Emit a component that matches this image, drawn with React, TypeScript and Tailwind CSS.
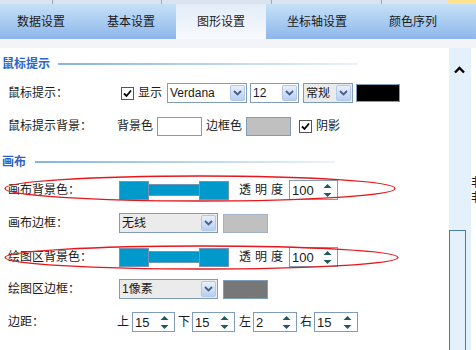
import React from "react";

const Chevron = () => (
  <svg width="9" height="6" viewBox="0 0 9 6">
    <path d="M1 1 L4.5 4.5 L8 1" fill="none" stroke="#4a5f86" strokeWidth="1.8" />
  </svg>
);

const Select = ({ text, cls }: { text: string; cls: string }) => (
  <div className={`flex items-center h-[20px] border border-[#7f9db9] ${cls}`}>
    <span className="flex-1 pl-[2px] leading-none whitespace-nowrap overflow-hidden">{text}</span>
    <div className="w-[15px] h-[16px] mr-[1px] border border-[#b3c8e8] rounded-[2px] bg-linear-to-b from-[#e8f0fc] to-[#b9cff1] flex items-center justify-center">
      <Chevron />
    </div>
  </div>
);

const Spin = ({ v, cls }: { v: string; cls: string }) => (
  <div className={`flex items-center h-[20px] border border-[#7f9db9] bg-white ${cls}`}>
    <span className="flex-1 pl-[2px] text-[13px] leading-none">{v}</span>
    <svg width="9" height="15" viewBox="0 0 9 15" className="mr-[5px]">
      <path d="M0.5 5 L4.5 1 L8.5 5 Z" fill="#1f5b5e" />
      <path d="M0.5 10 L4.5 14 L8.5 10 Z" fill="#1f5b5e" />
    </svg>
  </div>
);

const Check = () => (
  <div className="w-[13px] h-[13px] border border-[#555] bg-white flex items-center justify-center">
    <svg width="9" height="9" viewBox="0 0 9 9">
      <path d="M1 4.5 L3.5 7 L8 1.5" fill="none" stroke="#000" strokeWidth="1.8" />
    </svg>
  </div>
);

const Swatch = () => (
  <div className="flex items-center">
    <div className="w-[30px] h-[19px] border border-[#6f95b8] bg-[#0099cc]" />
    <div className="w-[50px] h-[12px] border-y border-[#6f95b8] bg-[#0099cc]" />
    <div className="w-[30px] h-[19px] border border-[#6f95b8] bg-[#0099cc]" />
  </div>
);

const Opacity = () => (
  <div className="flex items-center">
    <div className="ml-[10px] flex gap-[4px] w-[44px]">
      <span>透</span>
      <span>明</span>
      <span>度</span>
    </div>
    <Spin v="100" cls="ml-[6px] w-[49px]" />
  </div>
);

const Label = ({ t }: { t: string }) => <div className="w-[109px] shrink-0">{t}</div>;

export default function App() {
  return (
    <div className="relative w-[476px] h-[350px] overflow-hidden bg-white text-[12px] text-[#1a1a1a] font-['Liberation_Sans','Noto_Sans_CJK_SC',sans-serif]">
      {/* top strip */}
      <div className="h-[4px] flex bg-[#dbe3ee]">
        <div className="w-[52px]" />
        <div className="w-[1px] bg-[#9aa9bb]" />
        <div className="w-[108px]" />
        <div className="w-[1px] bg-[#9aa9bb]" />
        <div className="w-[109px]" />
        <div className="w-[1px] bg-[#9aa9bb]" />
        <div className="w-[109px]" />
        <div className="w-[1px] bg-[#9aa9bb]" />
        <div className="w-[65px]" />
        <div className="flex-1 bg-[#fde38e]" />
      </div>
      {/* tabs */}
      <div className="h-[35px] flex bg-linear-to-b from-[#c6e1f6] to-[#8db6eb] text-[12px]">
        <div className="w-[88px] pl-[17px] flex items-center">数据设置</div>
        <div className="w-[88px] pl-[19px] flex items-center">基本设置</div>
        <div className="w-[90px] pl-[21px] flex items-center bg-linear-to-b from-[#e2ecf8] to-[#f8fafd]">图形设置</div>
        <div className="w-[102px] pl-[21px] flex items-center">坐标轴设置</div>
        <div className="flex-1 pl-[21px] flex items-center">颜色序列</div>
      </div>
      <div className="h-[9px] bg-[#f2f4f8]" />
      {/* main */}
      <div className="flex h-[302px]">
        <div className="w-[449px] flex flex-col">
          {/* header 1 */}
          <div className="h-[32px] flex items-center pl-[2px]">
            <span className="text-[#2d64c8] font-bold w-[48px]">鼠标提示</span>
            <div className="ml-[8px] w-[300px] h-[2px] bg-linear-to-r from-[#86b4da] to-[#eaf3fb]" />
          </div>
          {/* row 1 */}
          <div className="h-[26px] flex items-center pl-[8px]">
            <Label t="鼠标提示：" />
            <div className="ml-[4px]"><Check /></div>
            <span className="ml-[4px]">显示</span>
            <Select text="Verdana" cls="ml-[5px] w-[80px] bg-white" />
            <Select text="12" cls="ml-[3px] w-[49px] bg-white" />
            <Select text="常规" cls="ml-[4px] w-[50px] bg-[#ebebeb]" />
            <div className="ml-[3px] w-[44px] h-[18px] border border-[#7f9db9] bg-black" />
          </div>
          {/* row 2 */}
          <div className="h-[40px] flex items-center pl-[8px]">
            <Label t="鼠标提示背景：" />
            <span>背景色</span>
            <div className="ml-[4px] w-[45px] h-[19px] border border-[#7f9db9] bg-white" />
            <span className="ml-[4px]">边框色</span>
            <div className="ml-[4px] w-[45px] h-[19px] border border-[#7f9db9] bg-[#c0c0c0]" />
            <div className="ml-[8px]"><Check /></div>
            <span className="ml-[4px]">阴影</span>
          </div>
          {/* header 2 */}
          <div className="h-[32px] flex items-center pl-[2px]">
            <span className="text-[#2d64c8] font-bold w-[24px]">画布</span>
            <div className="ml-[9px] w-[300px] h-[2px] bg-linear-to-r from-[#86b4da] to-[#eaf3fb]" />
          </div>
          {/* row 3 */}
          <div className="h-[24px] flex items-center pl-[8px]">
            <Label t="画布背景色：" />
            <div className="ml-[2px]"><Swatch /></div>
            <Opacity />
          </div>
          {/* row 4 */}
          <div className="h-[42px] flex items-center pl-[8px]">
            <Label t="画布边框：" />
            <Select text="无线" cls="ml-[2px] w-[99px] bg-[#ebebeb]" />
            <div className="ml-[5px] w-[45px] h-[19px] border border-[#9fb3c8] bg-[#c0c0c0]" />
          </div>
          {/* row 5 */}
          <div className="h-[26px] flex items-center pl-[8px]">
            <Label t="绘图区背景色：" />
            <div className="ml-[2px]"><Swatch /></div>
            <Opacity />
          </div>
          {/* row 6 */}
          <div className="h-[38px] flex items-center pl-[8px]">
            <Label t="绘图区边框：" />
            <Select text="1像素" cls="ml-[2px] w-[99px] bg-[#ebebeb]" />
            <div className="ml-[5px] w-[45px] h-[19px] border border-[#7f9db9] bg-[#777777]" />
          </div>
          {/* row 7 */}
          <div className="h-[28px] flex items-center pl-[8px]">
            <Label t="边距：" />
            <span>上</span>
            <Spin v="15" cls="ml-[3px] w-[43px]" />
            <span className="ml-[3px]">下</span>
            <Spin v="15" cls="ml-[2px] w-[43px]" />
            <span className="ml-[4px]">左</span>
            <Spin v="2" cls="ml-[2px] w-[44px]" />
            <span className="ml-[3px]">右</span>
            <Spin v="15" cls="ml-[2px] w-[44px]" />
          </div>
        </div>
        {/* scrollbar */}
        <div className="w-[22px] bg-[#e5f1fa] flex flex-col">
          <div className="h-[182px] flex justify-center pt-[18px]">
            <svg width="11" height="8" viewBox="0 0 11 8" className="ml-[-2px]">
              <path d="M1 6.5 L5.5 2 L10 6.5" fill="none" stroke="#000" strokeWidth="2.4" />
            </svg>
          </div>
          <div className="flex-1 w-[17px] border border-b-0 border-[#4d7ca5] bg-[#e5f1fa]" />
        </div>
        <div className="w-[5px] overflow-hidden">
          <div className="pt-[128px] text-[12px] leading-[15px] whitespace-nowrap">
            <div>非</div>
            <div>非</div>
          </div>
        </div>
      </div>
      {/* red annotation ellipses */}
      <svg className="absolute left-0 top-0 pointer-events-none" width="476" height="350">
        <ellipse cx="200" cy="188.5" rx="195" ry="12.5" fill="none" stroke="#e8161b" strokeWidth="1.3" />
        <ellipse cx="201.5" cy="257.5" rx="196.5" ry="11.5" fill="none" stroke="#e8161b" strokeWidth="1.3" />
      </svg>
    </div>
  );
}
